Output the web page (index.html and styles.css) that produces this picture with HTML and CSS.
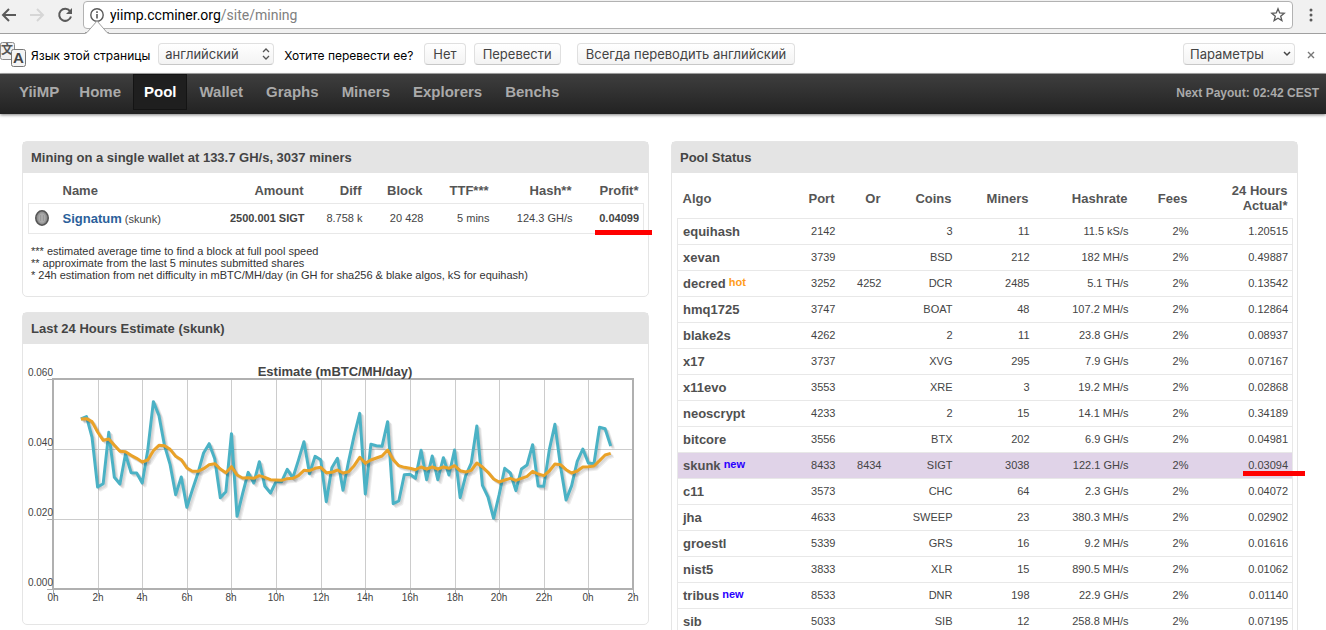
FILE: index.html
```html
<!DOCTYPE html>
<html lang="en">
<head>
    <meta charset="UTF-8">
    <meta name="viewport" content="width=device-width, initial-scale=1.0">
    <title>YiiMP - Pool</title>
    <link rel="stylesheet" href="styles.css">
</head>
<body>
    <div class="toolbar">
        <button class="tool" aria-label="Back">
            <svg width="16" height="16" viewBox="0 0 16 16"><path d="M15 8H2M8 2L2 8l6 6" fill="none" stroke="#5a5a5a" stroke-width="2"/></svg>
        </button>
        <button class="tool" aria-label="Forward" disabled>
            <svg width="16" height="16" viewBox="0 0 16 16"><path d="M1 8h13M8 2l6 6-6 6" fill="none" stroke="#d6d6d6" stroke-width="2"/></svg>
        </button>
        <button class="tool" aria-label="Reload">
            <svg width="16" height="16" viewBox="0 0 16 16"><path d="M13 4.200A6 6 0 1 0 14 9.500" fill="none" stroke="#5a5a5a" stroke-width="2"/><path d="M15 1v6H9z" fill="#5a5a5a"/></svg>
        </button>
        <div class="omnibox">
            <svg class="info" width="14" height="14" viewBox="0 0 14 14"><circle cx="7" cy="7" r="6.200" fill="none" stroke="#5a5a5a" stroke-width="1.400"/><path d="M6.200 6h1.600v4.500H6.200zM6.200 3.300h1.600v1.600H6.200z" fill="#5a5a5a"/></svg>
            <input class="url" type="text" value="yiimp.ccminer.org" aria-label="Address"><span class="path">/site/mining</span>
            <button class="star" aria-label="Bookmark">
                <svg width="16" height="16" viewBox="0 0 16 16"><path d="M8 1.800l1.700 4.200 4.500.3-3.500 2.900 1.200 4.400L8 11.200l-3.900 2.400 1.200-4.400L1.800 6.300l4.500-.3z" fill="none" stroke="#5a5a5a" stroke-width="1.300"/></svg>
            </button>
        </div>
        <button class="dots" aria-label="Menu">
            <svg width="4" height="14" viewBox="0 0 4 14"><circle cx="2" cy="2" r="1.500" fill="#5a5a5a"/><circle cx="2" cy="7" r="1.500" fill="#5a5a5a"/><circle cx="2" cy="12" r="1.500" fill="#5a5a5a"/></svg>
        </button>
        <svg class="arrow" width="24" height="14" viewBox="0 0 24 14"><path d="M0 14L2 13 12 1l10 12 2 1z" fill="#fff"/><path d="M0 12.500h2L12 1l10 11.500h2" fill="none" stroke="#a0a0a0"/></svg>
    </div>

    <div class="translate">
        <svg class="lang-icon" width="26" height="27" viewBox="0 0 26 27">
            <rect x=".5" y=".5" width="14" height="17" rx="2" fill="#f1f1f1" stroke="#8c8c8c"/>
            <text x="1" y="12" class="icon-text">文</text>
            <rect x="11.500" y="7.500" width="14" height="17" rx="2" fill="#f4f4f4" stroke="#777"/>
            <text x="13" y="21" class="icon-letter">A</text>
        </svg>
        <label for="lang">Язык этой страницы</label>
        <span class="drop drop-lang">
            <select id="lang"><option>английский</option></select>
            <svg width="8" height="12" viewBox="0 0 8 12"><path d="M1 4l3-3 3 3M1 8l3 3 3-3" fill="none" stroke="#555" stroke-width="1.300"/></svg>
        </span>
        <span class="question">Хотите перевести ее?</span>
        <button class="btn">Нет</button>
        <button class="btn">Перевести</button>
        <button class="btn btn-always">Всегда переводить английский</button>
        <span class="drop drop-options">
            <select aria-label="Параметры"><option>Параметры</option></select>
            <svg width="8" height="12" viewBox="0 0 8 12"><path d="M1 4l3 3 3-3" fill="none" stroke="#444" stroke-width="1.500"/></svg>
        </span>
        <button class="close" aria-label="Close">
            <svg width="8" height="8" viewBox="0 0 8 8"><path d="M1 1l6 6M7 1L1 7" stroke="#777" stroke-width="1.400"/></svg>
        </button>
    </div>

    <nav class="menu">
        <a class="brand" href="#">YiiMP</a>
        <a href="#">Home</a>
        <a class="active" href="#">Pool</a>
        <a href="#">Wallet</a>
        <a href="#">Graphs</a>
        <a href="#">Miners</a>
        <a href="#">Explorers</a>
        <a href="#">Benchs</a>
        <span class="payout">Next Payout: 02:42 CEST</span>
    </nav>

    <main class="content">
        <div class="column">
            <section class="box">
                <h2>Mining on a single wallet at 133.7 GH/s, 3037 miners</h2>
                <div class="inner">
                    <table class="mining">
                        <colgroup>
                            <col class="w-icon"><col><col class="w-amount"><col class="w-diff"><col class="w-block"><col class="w-ttf"><col class="w-hash"><col class="w-profit">
                        </colgroup>
                        <thead>
                            <tr><th></th><th class="left">Name</th><th>Amount</th><th>Diff</th><th>Block</th><th>TTF***</th><th>Hash**</th><th>Profit*</th></tr>
                        </thead>
                        <tbody>
                            <tr>
                                <td class="coin"><svg width="16" height="18" viewBox="0 0 16 18"><ellipse cx="8" cy="8" rx="6.200" ry="7.200" fill="#8d8d8d" stroke="#555" stroke-width="1.600"/><ellipse cx="8" cy="8" rx="4" ry="5.200" fill="#aaa" stroke="#999"/><path d="M6.500 5v6M9.500 5v6" stroke="#999"/></svg></td>
                                <td class="left"><a href="#">Signatum</a> <span>(skunk)</span></td>
                                <td><b>2500.001 SIGT</b></td>
                                <td>8.758 k</td>
                                <td>20 428</td>
                                <td>5 mins</td>
                                <td>124.3 GH/s</td>
                                <td class="marked"><b>0.04099</b><i class="mark mark-profit"></i></td>
                            </tr>
                        </tbody>
                    </table>
                    <p class="notes">
                        *** estimated average time to find a block at full pool speed<br>
                        ** approximate from the last 5 minutes submitted shares<br>
                        * 24h estimation from net difficulty in mBTC/MH/day (in GH for sha256 &amp; blake algos, kS for equihash)
                    </p>
                </div>
            </section>

            <section class="box">
                <h2>Last 24 Hours Estimate (skunk)</h2>
                <svg class="graph" viewBox="0 0 625 280">
                    <path class="grid" d="M75.500 36v210M119.500 36v210M164.500 36v210M208.500 36v210M253.500 36v210M298.500 36v210M342.500 36v210M387.500 36v210M432.500 36v210M476.500 36v210M521.500 36v210M565.500 36v210M31 105.500h579M31 175.500h579"/>
                    <path class="ticks" d="M24 35.500h6M24 105.500h6M24 175.500h6M24 245.500h6M30.500 246v4M75.500 246v4M119.500 246v4M164.500 246v4M208.500 246v4M253.500 246v4M298.500 246v4M342.500 246v4M387.500 246v4M432.500 246v4M476.500 246v4M521.500 246v4M565.500 246v4M610.500 246v4"/>
                    <rect class="frame" x="30" y="35" width="580" height="210"/>
                    <g id="series"></g>
                    <text class="graph-title" x="312" y="32">Estimate (mBTC/MH/day)</text>
                    <g class="y-labels">
                        <text x="30" y="32">0.060</text>
                        <text x="30" y="102">0.040</text>
                        <text x="30" y="172">0.020</text>
                        <text x="30" y="242">0.000</text>
                    </g>
                    <g class="x-labels">
                        <text x="30" y="257">0h</text>
                        <text x="75" y="257">2h</text>
                        <text x="119" y="257">4h</text>
                        <text x="164" y="257">6h</text>
                        <text x="208" y="257">8h</text>
                        <text x="253" y="257">10h</text>
                        <text x="298" y="257">12h</text>
                        <text x="342" y="257">14h</text>
                        <text x="387" y="257">16h</text>
                        <text x="432" y="257">18h</text>
                        <text x="476" y="257">20h</text>
                        <text x="521" y="257">22h</text>
                        <text x="565" y="257">0h</text>
                        <text x="610" y="257">2h</text>
                    </g>
                </svg>
            </section>
        </div>

        <section class="box">
            <h2>Pool Status</h2>
            <div class="inner">
                <table class="status">
                    <colgroup>
                        <col><col class="w-port"><col class="w-or"><col class="w-coins"><col class="w-miners"><col class="w-rate"><col class="w-fees"><col class="w-actual">
                    </colgroup>
                    <thead>
                        <tr><th class="left">Algo</th><th>Port</th><th>Or</th><th>Coins</th><th>Miners</th><th>Hashrate</th><th>Fees</th><th>24 Hours<br>Actual*</th></tr>
                    </thead>
                    <tbody>
                        <tr><td class="left"><b>equihash</b></td><td>2142</td><td></td><td>3</td><td>11</td><td>11.5 kS/s</td><td>2%</td><td>1.20515</td></tr>
                        <tr><td class="left"><b>xevan</b></td><td>3739</td><td></td><td>BSD</td><td>212</td><td>182 MH/s</td><td>2%</td><td>0.49887</td></tr>
                        <tr><td class="left"><b>decred</b> <sup class="hot">hot</sup></td><td>3252</td><td>4252</td><td>DCR</td><td>2485</td><td>5.1 TH/s</td><td>2%</td><td>0.13542</td></tr>
                        <tr><td class="left"><b>hmq1725</b></td><td>3747</td><td></td><td>BOAT</td><td>48</td><td>107.2 MH/s</td><td>2%</td><td>0.12864</td></tr>
                        <tr><td class="left"><b>blake2s</b></td><td>4262</td><td></td><td>2</td><td>11</td><td>23.8 GH/s</td><td>2%</td><td>0.08937</td></tr>
                        <tr><td class="left"><b>x17</b></td><td>3737</td><td></td><td>XVG</td><td>295</td><td>7.9 GH/s</td><td>2%</td><td>0.07167</td></tr>
                        <tr><td class="left"><b>x11evo</b></td><td>3553</td><td></td><td>XRE</td><td>3</td><td>19.2 MH/s</td><td>2%</td><td>0.02868</td></tr>
                        <tr><td class="left"><b>neoscrypt</b></td><td>4233</td><td></td><td>2</td><td>15</td><td>14.1 MH/s</td><td>2%</td><td>0.34189</td></tr>
                        <tr><td class="left"><b>bitcore</b></td><td>3556</td><td></td><td>BTX</td><td>202</td><td>6.9 GH/s</td><td>2%</td><td>0.04981</td></tr>
                        <tr class="selected"><td class="left"><b>skunk</b> <sup class="new">new</sup></td><td>8433</td><td>8434</td><td>SIGT</td><td>3038</td><td>122.1 GH/s</td><td>2%</td><td class="marked">0.03094<i class="mark mark-actual"></i></td></tr>
                        <tr><td class="left"><b>c11</b></td><td>3573</td><td></td><td>CHC</td><td>64</td><td>2.3 GH/s</td><td>2%</td><td>0.04072</td></tr>
                        <tr><td class="left"><b>jha</b></td><td>4633</td><td></td><td>SWEEP</td><td>23</td><td>380.3 MH/s</td><td>2%</td><td>0.02902</td></tr>
                        <tr><td class="left"><b>groestl</b></td><td>5339</td><td></td><td>GRS</td><td>16</td><td>9.2 MH/s</td><td>2%</td><td>0.01616</td></tr>
                        <tr><td class="left"><b>nist5</b></td><td>3833</td><td></td><td>XLR</td><td>15</td><td>890.5 MH/s</td><td>2%</td><td>0.01062</td></tr>
                        <tr><td class="left"><b>tribus</b> <sup class="new">new</sup></td><td>8533</td><td></td><td>DNR</td><td>198</td><td>22.9 GH/s</td><td>2%</td><td>0.01140</td></tr>
                        <tr><td class="left"><b>sib</b></td><td>5033</td><td></td><td>SIB</td><td>12</td><td>258.8 MH/s</td><td>2%</td><td>0.07195</td></tr>
                    </tbody>
                </table>
            </div>
        </section>
    </main>
    <script src="graph.js"></script>
</body>
</html>
```

FILE: styles.css
```css
body {
    margin: 0;
    height: 100vh;
    overflow: hidden;
    background: white;
    color: #444;
    font-family: "Liberation Sans", Arial, sans-serif;
    font-size: 11px;
}
button {
    padding: 0;
    border: none;
    background: none;
    font: inherit;
    cursor: pointer;
}
svg {
    display: block;
}

/* browser toolbar */
.toolbar {
    position: relative;
    display: flex;
    align-items: center;
    box-sizing: border-box;
    height: 34px;
    padding: 0 13px 4px 1px;
    background: #f1f1f1;
    border-bottom: 1px solid #a0a0a0;
    font-family: Roboto, sans-serif;
    font-size: 14px;
}
.tool {
    margin-right: 12px;
}
.tool:nth-child(3) {
    margin-right: 10px;
}
.omnibox {
    flex: 1;
    display: flex;
    align-items: center;
    box-sizing: border-box;
    height: 28px;
    margin-top: 1px;
    padding: 0 6px;
    background: white;
    border: 1px solid #b2b2b2;
    border-radius: 4px;
}
.url {
    field-sizing: content;
    margin-left: 6px;
    padding: 0;
    border: none;
    outline: none;
    font: inherit;
    color: black;
}
.path {
    flex: 1;
    color: #808080;
}
.dots {
    margin-left: 16px;
}
.arrow {
    position: absolute;
    left: 85px;
    bottom: -1px;
}

/* translate bar */
.translate {
    display: flex;
    align-items: center;
    box-sizing: border-box;
    height: 40px;
    padding-right: 11px;
    border-bottom: 1px solid #a9a9a9;
    color: black;
    font-family: Inter, Roboto, sans-serif;
    font-size: 12px;
}
.translate label,
.question,
.lang-icon,
.close {
    padding-top: 3px;
}
.lang-icon {
    margin-right: 5px;
}
.icon-text {
    font: bold 12px "Noto Sans CJK SC", sans-serif;
    fill: #555;
}
.icon-letter {
    font: bold 15px "Liberation Sans", sans-serif;
    fill: #444;
}
.drop {
    position: relative;
}
.drop select {
    appearance: none;
    width: 100%;
    font: inherit;
}
.drop select,
.btn {
    box-sizing: border-box;
    height: 22px;
    padding: 0 8px;
    background: linear-gradient(#fff, #f3f3f3);
    border: 1px solid #e0e0e0;
    border-bottom-color: #c8c8c8;
    border-radius: 4px;
    color: #444;
    font-size: 13px;
}
.drop select {
    padding: 0 6px;
}
.drop svg {
    position: absolute;
    right: 4px;
    top: 5px;
    pointer-events: none;
}
.drop-lang {
    width: 116px;
    margin: 0 10px 0 8px;
}
.drop-options {
    width: 112px;
    margin-left: auto;
}
.btn {
    margin-left: 8px;
}
.question {
    margin-right: 3px;
}
.btn-always {
    margin-left: 16px;
}
.close {
    margin-left: 12px;
}

/* menu */
.menu {
    display: flex;
    align-items: flex-start;
    gap: 1px;
    height: 40px;
    padding: 0 7px 0 8px;
    background: linear-gradient(#3e3e3e, #222);
    box-shadow: 0 1px 3px rgba(0, 0, 0, 0.5);
    font-size: 15px;
    font-weight: bold;
}
.menu a {
    height: 36px;
    padding: 0 11px;
    line-height: 36px;
    color: #aaa;
    text-decoration: none;
}
.menu .brand {
    padding-right: 8px;
}
.menu .active {
    background: #1f1f1f;
    box-shadow: inset 0 0 0 1px #141414;
    color: white;
}
.payout {
    margin-left: auto;
    line-height: 38px;
    color: #aaa;
    font-size: 12px;
}

/* boxes */
.content {
    display: grid;
    grid-template-columns: 1fr 1fr;
    gap: 22px;
    padding: 27px 28px 0 22px;
}
.box {
    margin-bottom: 15px;
    border: 1px solid #e5e5e5;
    border-radius: 5px;
}
.box h2 {
    margin: 0;
    padding: 0 8px;
    background: #e4e4e4;
    font-size: 13px;
    line-height: 31px;
}
.inner {
    padding: 5px 4px 15px 5px;
}
.notes {
    margin: 11px 3px 0;
    line-height: 12px;
    color: #333;
}

table {
    width: 100%;
    table-layout: fixed;
    border-collapse: collapse;
}
th {
    padding: 5px;
    color: #555;
    font-size: 13px;
    line-height: 15px;
    text-align: right;
}
td {
    box-sizing: border-box;
    height: 26px;
    padding: 0 4px 0 5px;
    line-height: 15px;
    text-align: right;
    white-space: nowrap;
}
tbody tr {
    border: 1px solid #e8e8e8;
}
.left {
    text-align: left;
}
.mining td {
    height: 30px;
}
.mining td a {
    color: #2b5f9b;
    font-size: 13px;
    font-weight: bold;
    text-decoration: none;
}
.status td b {
    color: #505050;
    font-size: 13px;
}
sup {
    font-size: 11px;
    font-weight: bold;
    line-height: 0;
    vertical-align: 2px;
}
.hot {
    color: #ff9c1a;
}
.new {
    color: #2a00ff;
}
.selected {
    background: #e0d3e8;
}

.w-icon { width: 29px; }
.w-amount { width: 86px; }
.w-diff { width: 58px; }
.w-block { width: 61px; }
.w-ttf { width: 66px; }
.w-hash { width: 83px; }
.w-profit { width: 67px; }
.w-port { width: 65px; }
.w-or { width: 46px; }
.w-coins { width: 71px; }
.w-miners { width: 77px; }
.w-rate { width: 99px; }
.w-fees { width: 60px; }
.w-actual { width: 100px; }

.marked {
    position: relative;
}
.mark {
    position: absolute;
    height: 5px;
    background: #f00;
}
.mark-profit {
    right: -9px;
    bottom: -2px;
    width: 57px;
}
.mark-actual {
    right: -13px;
    bottom: 2px;
    width: 62px;
}

/* graph */
.graph {
    width: 100%;
    fill: #444;
    font-size: 10px;
}
.grid {
    stroke: #ccc;
}
.ticks {
    stroke: #aaa;
}
.frame {
    fill: none;
    stroke: #b0b0b0;
    stroke-width: 2px;
}
.graph-title {
    font-size: 13px;
    font-weight: bold;
    text-anchor: middle;
}
.y-labels {
    text-anchor: end;
}
.x-labels {
    text-anchor: middle;
}
#series polyline {
    fill: none;
    stroke-width: 3px;
    stroke-linejoin: round;
}
```

FILE: graph.js
```js
// one sample every 15 minutes, from 1h15. 0 is the top of the graph, 630 the bottom
const estimate = [
    120, 113, 175, 324, 314, 160, 295, 315, 225, 281, 282, 312, 212, 68, 110, 200,
    257, 347, 294, 385, 332, 282, 222, 194, 239, 356, 338, 164, 412, 344, 280, 312,
    248, 322, 342, 308, 308, 271, 297, 244, 188, 284, 232, 242, 368, 266, 238, 334,
    247, 170, 103, 345, 196, 200, 202, 128, 374, 366, 287, 286, 298, 214, 302, 231,
    302, 236, 288, 213, 356, 290, 252, 141, 319, 354, 418, 347, 268, 282, 335, 270,
    258, 197, 321, 322, 212, 136, 262, 363, 320, 247, 210, 252, 254, 145, 149, 201
];
const average = [
    120, 119, 128, 159, 184, 180, 199, 217, 218, 229, 238, 249, 243, 215, 199, 200,
    211, 232, 242, 267, 277, 277, 269, 257, 254, 270, 281, 263, 288, 297, 296, 298,
    290, 295, 302, 303, 304, 299, 298, 290, 274, 275, 268, 265, 281, 280, 273, 282,
    278, 260, 235, 253, 243, 237, 231, 213, 242, 260, 265, 268, 272, 264, 270, 264,
    270, 264, 268, 260, 275, 279, 274, 252, 264, 280, 300, 309, 303, 298, 304, 298,
    292, 277, 285, 290, 276, 255, 257, 272, 282, 276, 264, 263, 261, 245, 228, 223
];

const series = document.getElementById("series");

function addLine(values, color, opacity, shift) {
    const line = document.createElementNS("http://www.w3.org/2000/svg", "polyline");
    const step = 580 / 104;
    const points = values.map((v, i) => (30 + (i + 5) * step + shift) + "," + (35 + v / 3 + shift));
    line.setAttribute("points", points.join(" "));
    line.setAttribute("stroke", color);
    line.setAttribute("stroke-opacity", opacity);
    series.appendChild(line);
}

function draw(values, color) {
    // shadow first, then the line over it
    for (let shift = 3; shift > 0; shift--) {
        addLine(values, "black", 0.07, shift);
    }
    addLine(values, color, 1, 0);
}

draw(estimate, "#4bb2c5");
draw(average, "#eaa228");
```
